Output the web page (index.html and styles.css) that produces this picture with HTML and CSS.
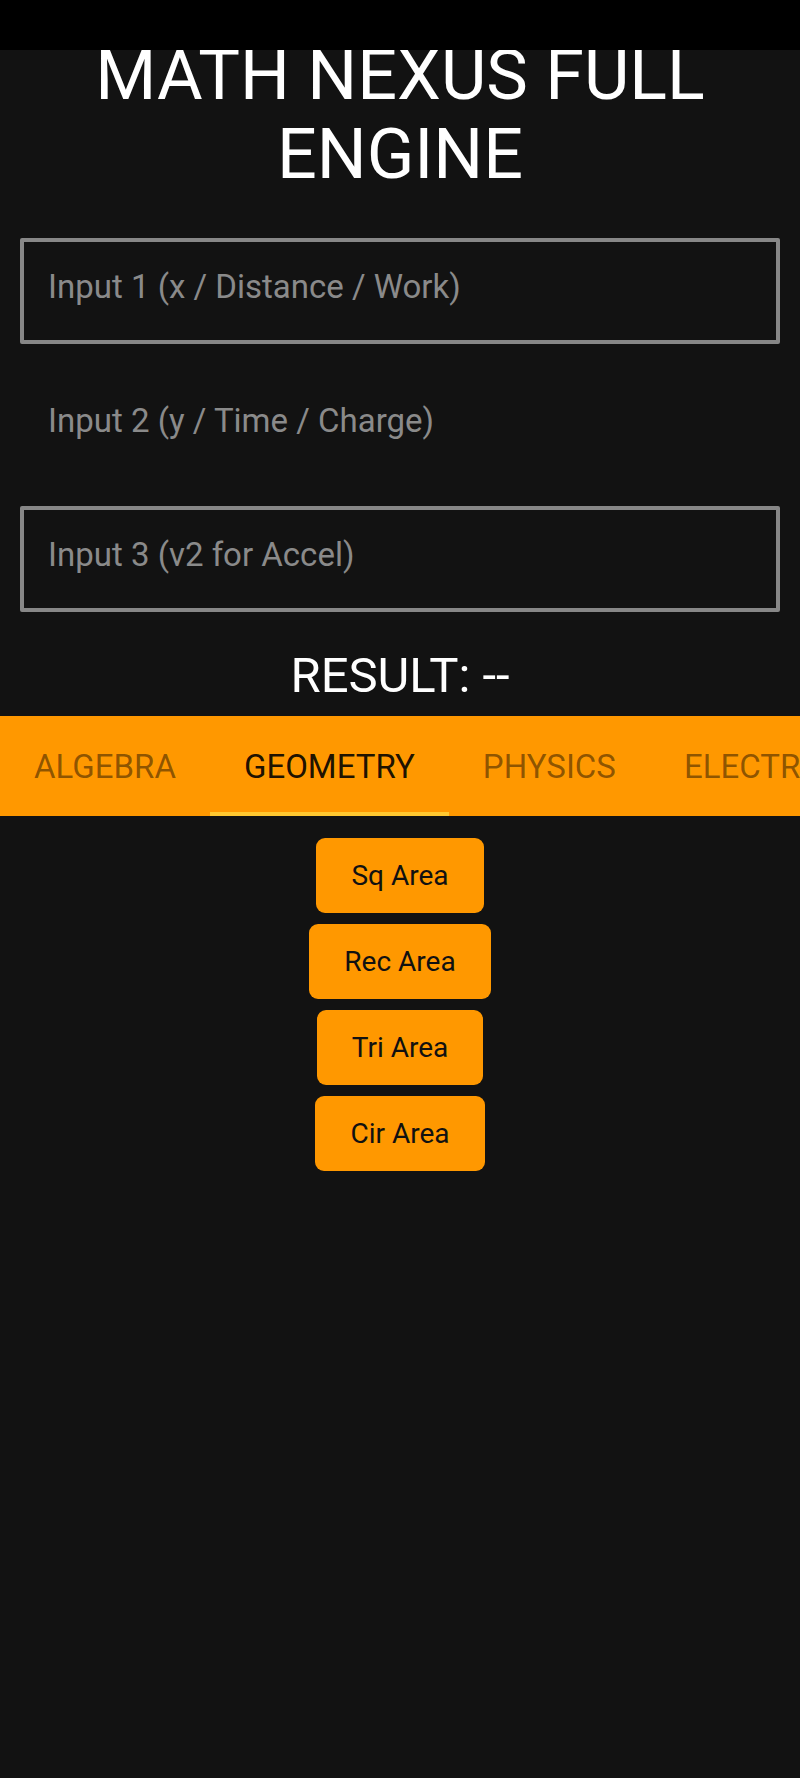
FILE: index.html
```html
<!DOCTYPE html>
<html lang="en">
<head>
<meta charset="utf-8">
<title>Math Nexus Full Engine</title>
<link rel="stylesheet" href="styles.css">
</head>
<body>
<div class="statusbar"></div>
<main class="app">
  <h1 class="title">MATH NEXUS FULL ENGINE</h1>
  <section class="inputs">
    <input class="field" type="text" placeholder="Input 1 (x / Distance / Work)">
    <input class="field field-plain" type="text" placeholder="Input 2 (y / Time / Charge)">
    <input class="field" type="text" placeholder="Input 3 (v2 for Accel)">
  </section>
  <div class="result">RESULT: --</div>
  <nav class="tabs">
    <div class="tab">ALGEBRA</div>
    <div class="tab tab-active">GEOMETRY</div>
    <div class="tab">PHYSICS</div>
    <div class="tab">ELECTRICITY</div>
  </nav>
  <section class="actions">
    <button class="btn">Sq Area</button>
    <button class="btn">Rec Area</button>
    <button class="btn">Tri Area</button>
    <button class="btn">Cir Area</button>
  </section>
</main>
</body>
</html>
```

FILE: styles.css
```css
html, body {
  margin: 0;
  padding: 0;
  background: #121212;
}

body {
  min-height: 1778px;
  font-family: Roboto, "Liberation Sans", sans-serif;
  color: #ffffff;
}

.statusbar {
  position: fixed;
  top: 0;
  left: 0;
  right: 0;
  height: 50px;
  background: #000000;
  z-index: 10;
}

.app {
  display: flex;
  flex-direction: column;
}

.title {
  margin: 0;
  padding: 36px 20px 0;
  font-size: 70px;
  line-height: 79px;
  font-weight: 400;
  text-align: center;
  color: #ffffff;
}

.inputs {
  display: flex;
  flex-direction: column;
  gap: 28px;
  padding: 44px 20px 0;
}

.field {
  box-sizing: border-box;
  width: 100%;
  height: 106px;
  margin: 0;
  padding: 0 20px 9px 24px;
  border: 4px solid #878787;
  border-radius: 2px;
  background: transparent;
  font-family: Roboto, "Liberation Sans", sans-serif;
  font-size: 33px;
  color: #e0e0e0;
  outline: none;
}

.field::placeholder {
  color: #8a8a8a;
  opacity: 1;
}

.field-plain {
  border-color: transparent;
}

.result {
  padding: 35px 0 12px;
  font-size: 49px;
  line-height: 57px;
  text-align: center;
  color: #ffffff;
}

.tabs {
  display: flex;
  height: 100px;
  background: #ff9800;
  overflow: hidden;
  white-space: nowrap;
}

.tab {
  flex: none;
  display: flex;
  align-items: center;
  padding: 0 34px;
  font-size: 33px;
  color: rgba(0, 0, 0, 0.46);
}

.tab-active {
  color: rgba(0, 0, 0, 0.9);
  box-shadow: inset 0 -4px 0 #ffc830;
}

.actions {
  display: flex;
  flex-direction: column;
  align-items: center;
  gap: 11px;
  padding-top: 22px;
}

.btn {
  height: 75px;
  padding: 0 35px;
  border: none;
  border-radius: 9px;
  background: #ff9800;
  color: #111111;
  font-family: Roboto, "Liberation Sans", sans-serif;
  font-size: 28px;
  cursor: pointer;
}
```
